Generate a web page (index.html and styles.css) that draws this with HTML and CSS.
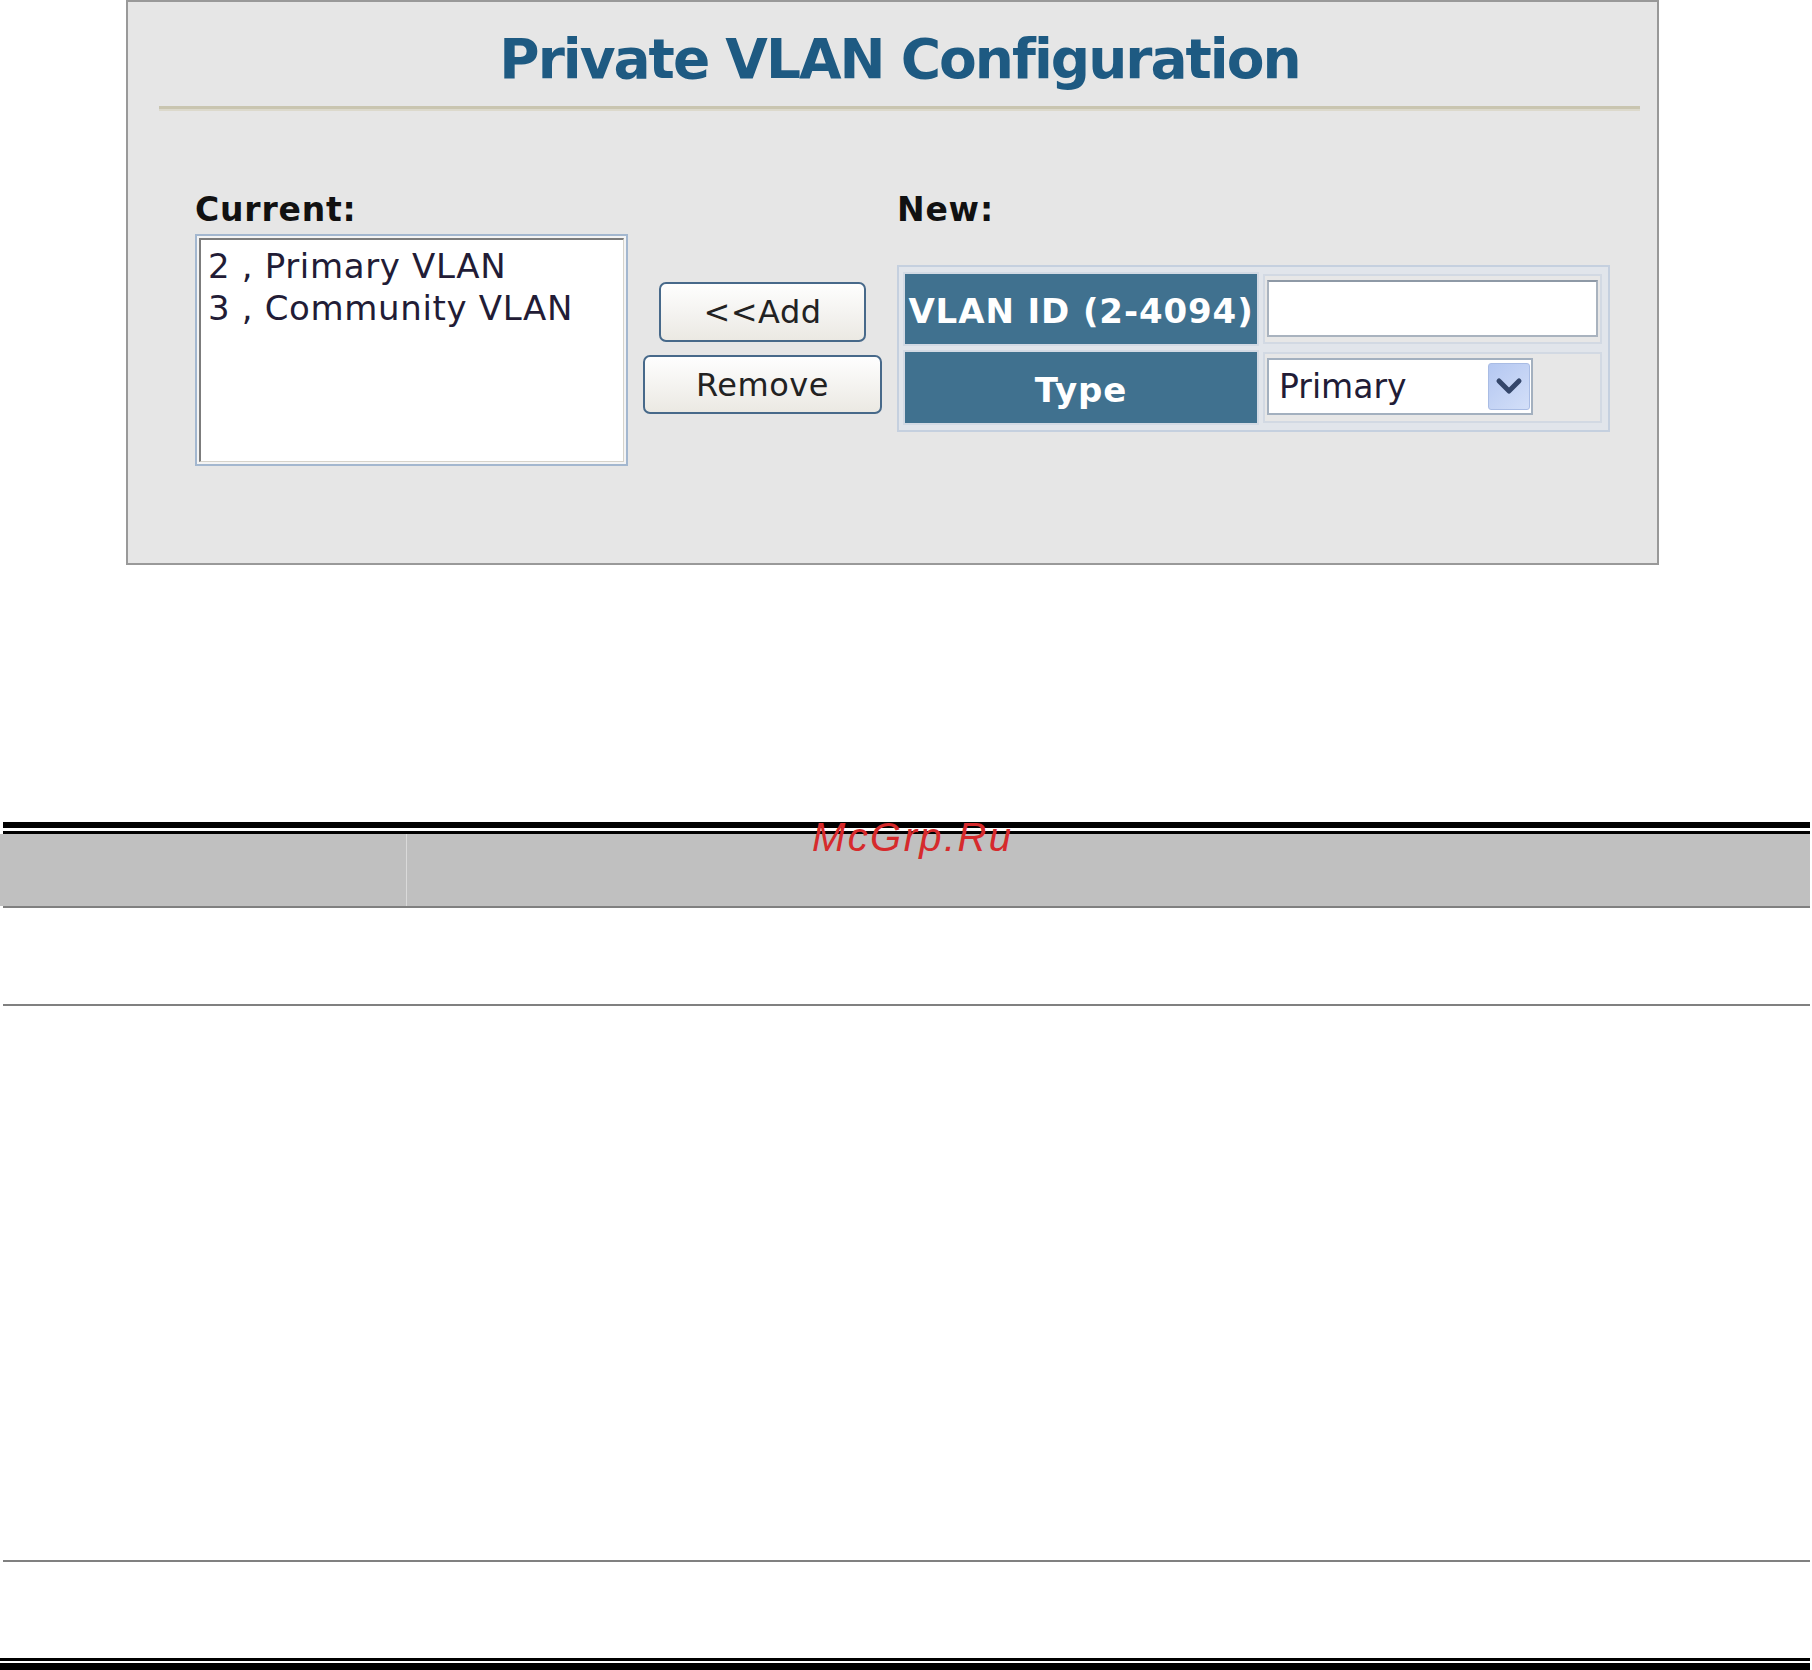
FILE: index.html
```html
<!DOCTYPE html>
<html>
<head>
<meta charset="utf-8">
<title>Private VLAN Configuration</title>
<link rel="stylesheet" href="styles.css">
</head>
<body>
<div class="panel">
  <div class="title">Private VLAN Configuration</div>
  <div class="rule"></div>
  <div class="content">
    <div class="col-current">
      <div class="label">Current:</div>
      <div class="listbox">
        <div class="listbox-inner">
          <div class="opt">2 , Primary VLAN</div>
          <div class="opt">3 , Community VLAN</div>
        </div>
      </div>
    </div>
    <div class="col-buttons">
      <div class="btn btn-add">&lt;&lt;Add</div>
      <div class="btn btn-remove">Remove</div>
    </div>
    <div class="col-new">
      <div class="label">New:</div>
      <div class="newtable">
        <div class="hcell">VLAN ID (2-4094)</div>
        <div class="vcell"><div class="textbox"></div></div>
        <div class="hcell">Type</div>
        <div class="vcell">
          <div class="select">
            <span class="select-text">Primary</span>
            <span class="select-btn">
              <svg width="42" height="47" viewBox="0 0 42 47"><polyline points="11,18 21,28 31,18" fill="none" stroke="#34466a" stroke-width="5" stroke-linecap="round" stroke-linejoin="round"/></svg>
            </span>
          </div>
        </div>
      </div>
    </div>
  </div>
</div>

<div class="doc">
  <div class="watermark">McGrp.Ru</div>
  <div class="dbl-top"></div>
  <div class="thead">
    <div class="th th-first"></div>
    <div class="th"></div>
  </div>
  <div class="row row-a"></div>
  <div class="row row-b"></div>
  <div class="row row-c"></div>
  <div class="dbl-bottom"></div>
</div>
</body>
</html>
```
FILE: styles.css
```css
html, body {
  margin: 0;
  padding: 0;
  background: #ffffff;
}
body {
  width: 1812px;
  height: 1670px;
  overflow: hidden;
  font-family: "DejaVu Sans", Verdana, sans-serif;
}
.panel {
  margin-left: 126px;
  width: 1533px;
  height: 565px;
  box-sizing: border-box;
  border: 2px solid #999999;
  background: #e6e6e6;
  padding-top: 27px;
}
.title {
  font-weight: bold;
  font-size: 55px;
  line-height: 60px;
  letter-spacing: -2px;
  color: #1e5a82;
  text-align: center;
  margin: 0 17px 0 31px;
  white-space: nowrap;
}
.rule {
  margin: 17px 17px 0 31px;
  height: 0;
  border-top: 3px solid #c9c5b0;
  border-bottom: 2px solid #dcd9cc;
}
.content {
  display: flex;
  align-items: flex-start;
  margin-top: 79px;
  padding-left: 67px;
}
.label {
  font-weight: bold;
  font-size: 33px;
  line-height: 40px;
  height: 40px;
  letter-spacing: 0.8px;
  color: #111111;
}
.col-current {
  width: 433px;
}
.listbox {
  margin-top: 4px;
  width: 433px;
  height: 232px;
  box-sizing: border-box;
  border: 2px solid #a3b7cf;
  padding: 2px;
  background: #f4f4f4;
}
.listbox-inner {
  height: 100%;
  box-sizing: border-box;
  border-top: 2px solid #7c7c7c;
  border-left: 2px solid #7c7c7c;
  border-right: 1px solid #d6d3cb;
  border-bottom: 1px solid #d6d3cb;
  background: #ffffff;
  padding: 5px 0 0 7px;
}
.opt {
  font-size: 34px;
  line-height: 42px;
  letter-spacing: 0.65px;
  color: #221c36;
  white-space: nowrap;
}
.col-buttons {
  width: 239px;
  margin-left: 15px;
  padding-top: 92px;
  display: flex;
  flex-direction: column;
  align-items: center;
}
.btn {
  box-sizing: border-box;
  border: 2px solid #47698a;
  border-radius: 7px;
  background: linear-gradient(#fefefe, #ebe9e3);
  color: #222222;
  font-size: 32px;
  letter-spacing: 0.5px;
  display: flex;
  align-items: center;
  justify-content: center;
}
.btn-add {
  width: 207px;
  height: 60px;
}
.btn-remove {
  width: 239px;
  height: 59px;
  margin-top: 13px;
}
.col-new {
  width: 713px;
  margin-left: 15px;
}
.newtable {
  margin-top: 35px;
  width: 713px;
  height: 167px;
  box-sizing: border-box;
  border: 2px solid #c5d0df;
  background: #e1e5eb;
  padding: 7px 6px;
  display: grid;
  grid-template-columns: 352px 1fr;
  grid-template-rows: 70px 71px;
  column-gap: 6px;
  row-gap: 8px;
}
.hcell {
  background: #40718f;
  color: #ffffff;
  font-weight: bold;
  font-size: 34px;
  letter-spacing: 0.9px;
  white-space: nowrap;
  display: flex;
  align-items: center;
  justify-content: center;
  padding-top: 4px;
  box-sizing: border-box;
  box-shadow: 0 0 0 2px #d3dae4;
}
.vcell {
  background: #e7e7e7;
  box-sizing: border-box;
  border: 2px solid #d2d9e3;
  padding: 4px 2px 0 2px;
}
.textbox {
  width: 331px;
  height: 57px;
  box-sizing: border-box;
  border: 2px solid #a9b3bf;
  border-top-color: #8e99a6;
  background: #ffffff;
}
.select {
  width: 266px;
  height: 57px;
  box-sizing: border-box;
  border: 2px solid #a3b0bf;
  background: #ffffff;
  display: flex;
  align-items: center;
  justify-content: space-between;
  padding-right: 1px;
}
.select-text {
  font-size: 33px;
  color: #221c36;
  padding-left: 10px;
}
.select-btn {
  width: 42px;
  height: 47px;
  box-sizing: border-box;
  border: 1px solid #a9bce4;
  border-radius: 3px;
  background: linear-gradient(135deg, #b4c7f1, #d3dff8);
  display: block;
}
.select-btn svg {
  display: block;
  margin: -1px;
}
.doc {
  position: relative;
  margin-top: 257px;
  width: 1810px;
}
.watermark {
  position: absolute;
  left: 812px;
  top: -8px;
  font-family: "Liberation Sans", Arial, sans-serif;
  font-style: italic;
  font-size: 40px;
  letter-spacing: 2.4px;
  color: #d62a2c;
  line-height: 46px;
  z-index: 2;
}
.dbl-top {
  margin-left: 3px;
  height: 3px;
  border-top: 6px solid #000000;
  border-bottom: 3px solid #000000;
  background: #ffffff;
}
.thead {
  height: 72px;
  background: #c0c0c0;
  display: grid;
  grid-template-columns: 407px 1fr;
}
.th-first {
  border-right: 1px solid #dadada;
}
.row {
  margin-left: 3px;
  border-top: 2px solid #808080;
}
.row-a {
  height: 96px;
}
.row-b {
  height: 554px;
}
.row-c {
  height: 96px;
}
.dbl-bottom {
  height: 2px;
  border-top: 3px solid #000000;
  border-bottom: 7px solid #000000;
  background: #ffffff;
}
```
